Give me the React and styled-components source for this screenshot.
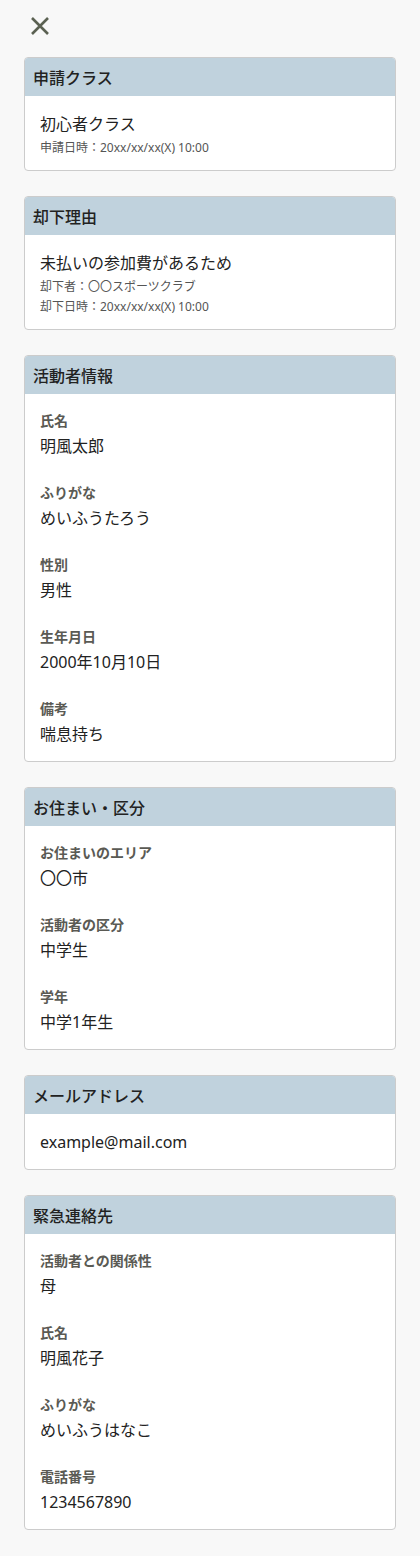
import React from 'react';
import styled, { createGlobalStyle } from 'styled-components';

const GlobalStyle = createGlobalStyle`
  * {
    box-sizing: border-box;
  }
  body {
    margin: 0;
    background-color: #f8f8f8;
    font-family: 'Noto Sans', 'Noto Sans CJK JP', sans-serif;
    color: #222222;
  }
`;

const Page = styled.div`
  display: flex;
  flex-direction: column;
  padding: 12px 24px 24px 24px;
`;

const CloseButton = styled.button`
  display: flex;
  align-items: center;
  justify-content: center;
  width: 28px;
  height: 28px;
  padding: 0;
  margin: 0 0 17px 2px;
  border: none;
  background: transparent;
  cursor: pointer;
  color: #5b6152;
`;

const CardList = styled.div`
  display: flex;
  flex-direction: column;
  gap: 25px;
`;

const Card = styled.section`
  background-color: #ffffff;
  border: 1px solid #cccccc;
  border-radius: 4px;
  overflow: hidden;
`;

const CardHeader = styled.h2`
  margin: 0;
  height: 38px;
  padding: 0 8px;
  display: flex;
  align-items: center;
  background-color: #c0d2dd;
  font-size: 16px;
  font-weight: 500;
  color: #222222;
`;

const CardBody = styled.div`
  display: flex;
  flex-direction: column;
  gap: ${(p) => (p.$fields ? '24px' : '0')};
  padding: ${(p) => (p.$fields ? '16px 15px 15px 15px' : '16px 15px 12px 15px')};
`;

const Title = styled.p`
  margin: 0 0 2px 0;
  font-size: 16px;
  line-height: 24px;
`;

const Note = styled.p`
  margin: 0;
  font-size: 12px;
  line-height: 20px;
  color: #555555;
`;

const Field = styled.div`
  display: flex;
  flex-direction: column;
  gap: 3px;
`;

const Label = styled.span`
  font-size: 14px;
  line-height: 21px;
  font-weight: 700;
  color: #5a5a54;
`;

const Value = styled.span`
  font-size: 16px;
  line-height: 24px;
  color: #222222;
`;

const CloseIcon = () => (
  <svg width="20" height="20" viewBox="0 0 20 20" fill="none">
    <path
      d="M2 2L18 18M18 2L2 18"
      stroke="currentColor"
      strokeWidth="2.6"
      strokeLinecap="butt"
    />
  </svg>
);

const sections = [
  {
    title: '活動者情報',
    fields: [
      ['氏名', '明風太郎'],
      ['ふりがな', 'めいふうたろう'],
      ['性別', '男性'],
      ['生年月日', '2000年10月10日'],
      ['備考', '喘息持ち'],
    ],
  },
  {
    title: 'お住まい・区分',
    fields: [
      ['お住まいのエリア', '〇〇市'],
      ['活動者の区分', '中学生'],
      ['学年', '中学1年生'],
    ],
  },
];

const emergency = [
  ['活動者との関係性', '母'],
  ['氏名', '明風花子'],
  ['ふりがな', 'めいふうはなこ'],
  ['電話番号', '1234567890'],
];

const FieldCard = ({ title, fields }) => (
  <Card>
    <CardHeader>{title}</CardHeader>
    <CardBody $fields>
      {fields.map(([label, value]) => (
        <Field key={label}>
          <Label>{label}</Label>
          <Value>{value}</Value>
        </Field>
      ))}
    </CardBody>
  </Card>
);

export default function App() {
  return (
    <>
      <GlobalStyle />
      <Page>
        <CloseButton type="button" aria-label="閉じる">
          <CloseIcon />
        </CloseButton>
        <CardList>
          <Card>
            <CardHeader>申請クラス</CardHeader>
            <CardBody>
              <Title>初心者クラス</Title>
              <Note>申請日時：20xx/xx/xx(X) 10:00</Note>
            </CardBody>
          </Card>
          <Card>
            <CardHeader>却下理由</CardHeader>
            <CardBody>
              <Title>未払いの参加費があるため</Title>
              <Note>却下者：〇〇スポーツクラブ</Note>
              <Note>却下日時：20xx/xx/xx(X) 10:00</Note>
            </CardBody>
          </Card>
          {sections.map((s) => (
            <FieldCard key={s.title} title={s.title} fields={s.fields} />
          ))}
          <Card>
            <CardHeader>メールアドレス</CardHeader>
            <CardBody $fields>
              <Value>example@mail.com</Value>
            </CardBody>
          </Card>
          <FieldCard title="緊急連絡先" fields={emergency} />
        </CardList>
      </Page>
    </>
  );
}
